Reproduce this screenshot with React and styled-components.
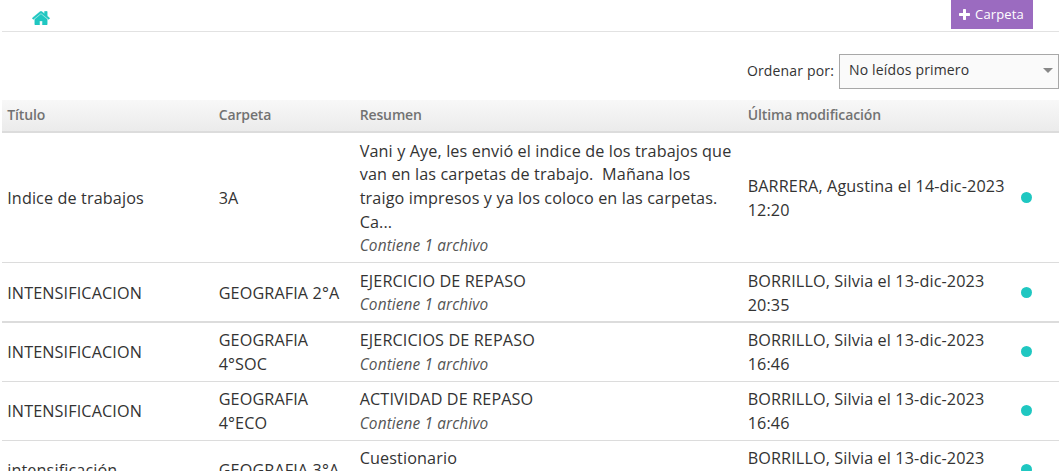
import React from 'react'
import styled, { createGlobalStyle } from 'styled-components'

const messages = [
	{
		title: 'Indice de trabajos',
		folder: '3A',
		summary: 'Vani y Aye, les envió el indice de los trabajos que van en las carpetas de trabajo.\u00a0 Mañana los traigo impresos y ya los coloco en las carpetas. Ca...',
		modified: 'BARRERA, Agustina el 14-dic-2023 12:20',
		height: 130,
		low: true,
	},
	{
		title: 'INTENSIFICACION',
		folder: 'GEOGRAFIA 2°A',
		summary: 'EJERCICIO DE REPASO',
		modified: 'BORRILLO, Silvia el 13-dic-2023 20:35',
		height: 60,
		low: true,
		thickBorder: true,
	},
	{
		title: 'INTENSIFICACION',
		folder: 'GEOGRAFIA 4°SOC',
		summary: 'EJERCICIOS DE REPASO',
		modified: 'BORRILLO, Silvia el 13-dic-2023 16:46',
		height: 59,
	},
	{
		title: 'INTENSIFICACION',
		folder: 'GEOGRAFIA 4°ECO',
		summary: 'ACTIVIDAD DE REPASO',
		modified: 'BORRILLO, Silvia el 13-dic-2023 16:46',
		height: 59,
	},
	{
		title: 'intensificación',
		folder: 'GEOGRAFIA 3°A',
		summary: 'Cuestionario',
		modified: 'BORRILLO, Silvia el 13-dic-2023 16:45',
		height: 59,
	},
]

const App = () => (
	<Page>
		<GlobalStyle />
		<Toolbar>
			<HomeLink href="#" aria-label="Inicio">
				<HomeIcon viewBox="0 0 1664 1312" preserveAspectRatio="none">
					<path d="M1408 768v480q0 26-19 45t-45 19H960V928H704v384H320q-26 0-45-19t-19-45V768q0-1 .5-3t.5-3l575-474 575 474q1 2 1 6zm223-69l-62 74q-8 9-21 11h-3q-13 0-21-7L832 200 140 777q-12 8-24 7-13-2-21-11l-62-74q-8-10-7-23.500t11-21.500l719-599q32-26 76-26t76 26l244 204V64q0-14 9-23t23-9h192q14 0 23 9t9 23v408l219 182q10 8 11 21.500t-7 23.500z" />
				</HomeIcon>
			</HomeLink>
			<AddButton>
				<PlusIcon viewBox="0 128 1408 1408">
					<path d="M1408 736v192q0 40-28 68t-68 28H896v416q0 40-28 68t-68 28H608q-40 0-68-28t-28-68v-416H96q-40 0-68-28T0 928V736q0-40 28-68t68-28h416V224q0-40 28-68t68-28h192q40 0 68 28t28 68v416h416q40 0 68 28t28 68z" />
				</PlusIcon>
				Carpeta
			</AddButton>
		</Toolbar>
		<SortBar>
			Ordenar por:
			<Select>
				No leídos primero
				<Caret />
			</Select>
		</SortBar>
		<HeaderRow>
			<span>Título</span>
			<span>Carpeta</span>
			<span>Resumen</span>
			<span>Última modificación</span>
		</HeaderRow>
		{messages.map((message, index) => (
			<Row key={`${index}`} $height={message.height} $thick={message.thickBorder}>
				<Cell $low={message.low}>{message.title}</Cell>
				<Cell $low={message.low}>{message.folder}</Cell>
				<Cell $low={message.low}>
					{message.summary}
					<Attachment $low={message.low}>Contiene 1 archivo</Attachment>
				</Cell>
				<Cell $low={message.low}>{message.modified}</Cell>
				<Dot $low={message.low} />
			</Row>
		))}
	</Page>
)
export default App

const GlobalStyle = createGlobalStyle`
	* {
		box-sizing: border-box;
	}
	body {
		margin: 0;
		overflow: hidden;
		background: #fff;
	}
`
const Page = styled.div`
	height: 471px;
	overflow: hidden;
	padding: 0 4px 0 2px;
	font-family: "Open Sans", sans-serif;
	font-size: 16px;
	color: #333;
`
const Toolbar = styled.div`
	display: flex;
	justify-content: space-between;
	align-items: flex-start;
	height: 32px;
	padding: 0 26px 0 30px;
	border-bottom: 1px solid #e2e2e2;
`
const HomeLink = styled.a`
	display: flex;
	padding-top: 11px;
	color: #1fc7c1;
`
const HomeIcon = styled.svg`
	width: 18px;
	height: 14px;
	fill: currentColor;
	stroke: currentColor;
	stroke-width: 36;
`
const AddButton = styled.button`
	display: flex;
	align-items: center;
	justify-content: center;
	gap: 5px;
	width: 82px;
	height: 29px;
	padding: 0 1px 1px 0;
	border: 0;
	background: #9b6bc0;
	color: #fff;
	font-family: inherit;
	font-size: 13px;
	letter-spacing: 0.150px;
`
const PlusIcon = styled.svg`
	width: 11px;
	height: 11px;
	fill: currentColor;
`
const SortBar = styled.div`
	display: flex;
	justify-content: flex-end;
	align-items: center;
	gap: 5px;
	height: 68px;
	padding-top: 10px;
	font-size: 14px;
	line-height: 20px;
	letter-spacing: 0.160px;
`
const Select = styled.div`
	display: flex;
	justify-content: space-between;
	align-items: center;
	width: 220px;
	height: 35px;
	padding: 0 5px 3px 9px;
	border: 1px solid #a8a8a8;
	background: #fafafa;
`
const Caret = styled.span`
	margin-top: 2px;
	border: 5px solid transparent;
	border-top-color: #888;
	border-bottom: 0;
`
const HeaderRow = styled.div`
	display: grid;
	grid-template-columns: 211.500px 141px 388px 272px 1fr;
	height: 33px;
	border-bottom: 2px solid #dcdcdc;
	background: linear-gradient(#f8f8f8, #ebebeb);
	color: #727272;
	font-size: 14px;
	font-weight: 600;
	line-height: 30px;
	letter-spacing: -0.130px;
	span {
		padding-left: 5.200px;
	}
`
const Row = styled.div`
	display: grid;
	grid-template-columns: 211.500px 141px 388px 272px 1fr;
	align-items: center;
	height: ${({ $height }) => $height}px;
	border-bottom: ${({ $thick }) => ($thick ? 2 : 1)}px solid #dcdcdc;
`
const Cell = styled.div`
	padding: ${({ $low }) => ($low ? 3 : 1)}px 5px 0 5.200px;
	font-size: 16.200px;
	line-height: 23.700px;
	letter-spacing: 0.120px;
`
const Attachment = styled.div`
	margin: ${({ $low }) => ($low ? '-1px 0 1px' : 0)};
	color: #555;
	font-size: 15.400px;
	font-style: italic;
	letter-spacing: 0.120px;
`
const Dot = styled.span`
	width: 11px;
	height: 11px;
	margin-left: 6px;
	margin-bottom: ${({ $low }) => ($low ? 0 : 1)}px;
	border-radius: 50%;
	background: #1fc7c1;
`
